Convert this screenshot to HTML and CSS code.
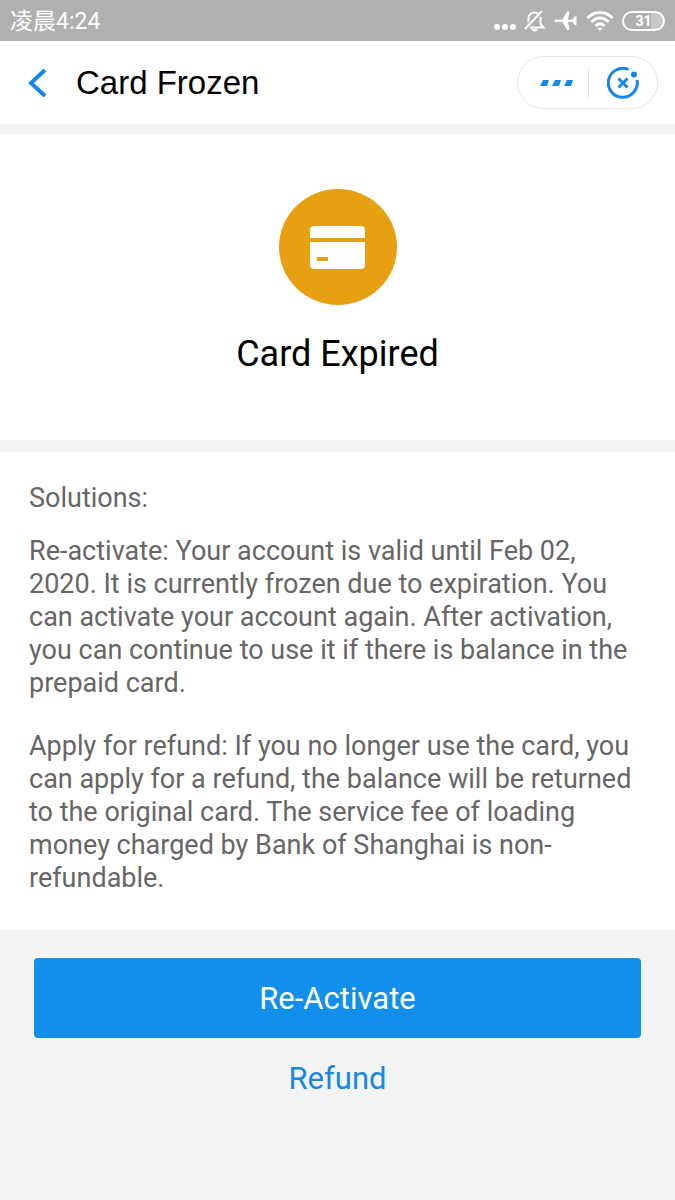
FILE: index.html
```html
<!DOCTYPE html>
<html lang="en">

<head>
    <meta charset="UTF-8" />
    <meta name="viewport" content="width=device-width, initial-scale=1.0" />
    <title>Card Frozen</title>
    <link rel="stylesheet" href="styles.css">
</head>

<body>
    <div class="status-bar">
        <span class="time" lang="zh">凌晨4:24</span>
        <div class="status-icons">
            <svg width="22" height="22" viewBox="0 0 22 22" fill="#fff" aria-hidden="true">
                <circle cx="3" cy="17" r="3" />
                <circle cx="11" cy="17" r="3" />
                <circle cx="19" cy="17" r="3" />
            </svg>
            <svg width="22" height="22" viewBox="0 0 22 22" fill="none" stroke="#fff" stroke-width="2" aria-hidden="true">
                <path d="M4.500 12V9c0-4 2.500-6.500 6-6.500 1.500 0 3 .5 4 1.500M16.500 7v7l3 3.500H6M1 19L18 1" />
                <path d="M7.500 19.500h6l-3 2z" fill="#fff" stroke-width="1" />
            </svg>
            <svg width="24" height="22" viewBox="0 0 24 22" fill="#fff" aria-hidden="true">
                <path d="M1.500 9.500H8.500L13 1.500h2.500L14 9.500H18.500L20.500 6.500h2V15h-2L18.500 12H14l1.500 8H13L8.500 12H1.500C0 12 0 9.500 1.500 9.500z" />
            </svg>
            <svg width="28" height="22" viewBox="0 0 28 22" fill="none" stroke="#fff" stroke-width="3" aria-hidden="true">
                <path d="M1.500 8C8 .5 20 .5 26.500 8" />
                <path d="M5.500 12c4.500-5.500 12.500-5.500 17 0" />
                <path d="M9.500 16c2.500-3 6.500-3 9 0" />
                <path d="M11 18.500c2-1.500 4-1.500 6 0l-3 2.500z" fill="#fff" stroke="none" />
            </svg>
            <span class="battery">31</span>
        </div>
    </div>

    <header class="header">
        <button class="back" type="button" aria-label="Back">
            <svg width="20" height="28" viewBox="0 0 20 28" fill="none" stroke="#1688e8" stroke-width="4">
                <path d="M17 1L3 14l14 13" />
            </svg>
        </button>
        <h1>Card Frozen</h1>
        <div class="capsule">
            <button class="more" type="button" aria-label="More">
                <svg width="34" height="6" viewBox="0 0 34 6" fill="#1688e8">
                    <path d="M3 0h6L7 6H0zM15 0h6l-2 6h-7zM27 0h6l-2 6h-7z" />
                </svg>
            </button>
            <button class="close" type="button" aria-label="Close">
                <svg width="32" height="32" viewBox="0 0 32 32" fill="none" stroke="#1688e8" stroke-width="3">
                    <path d="M21.500 2.500A14.500 14.500 0 1 0 30 13" />
                    <path d="M11.500 11.500l9 9M20.500 11.500l-9 9" />
                    <circle cx="27" cy="7.500" r="3" fill="#1688e8" stroke="none" />
                </svg>
            </button>
        </div>
    </header>

    <section class="card-status">
        <svg width="120" height="118" viewBox="0 0 120 118" aria-hidden="true">
            <ellipse cx="60" cy="59" rx="59" ry="58" fill="#e7a012" />
            <rect x="32" y="38" width="55" height="43" rx="4" fill="#fff" />
            <path d="M32 50h55v4H32zM39 69h11v4H39z" fill="#e7a012" />
        </svg>
        <h2>Card Expired</h2>
    </section>

    <main class="solutions">
        <h3>Solutions:</h3>
        <p>Re-activate: Your account is valid until Feb 02, 2020. It is currently frozen due to expiration. You can activate your account again. After activation, you can continue to use it if there is balance in the prepaid card.</p>
        <p>Apply for refund: If you no longer use the card, you can apply for a refund, the balance will be returned to the original card. The service fee of loading money charged by Bank of Shanghai is non-refundable.</p>
    </main>

    <div class="actions">
        <button class="btn btn-primary" type="button">Re-Activate</button>
        <button class="btn btn-link" type="button">Refund</button>
    </div>
</body>

</html>
```
FILE: styles.css
```css
* {
    box-sizing: border-box;
}

body {
    margin: 0;
    font-family: Roboto, "Noto Sans CJK SC", sans-serif;
    background-color: #f4f4f4;
    color: #000;
}

h1,
h2,
h3,
p {
    margin: 0;
    font-weight: 400;
}

button {
    padding: 0;
    border: 0;
    background: none;
    font-family: inherit;
    cursor: pointer;
}

svg {
    display: block;
}

.status-bar {
    display: flex;
    align-items: center;
    justify-content: space-between;
    height: 41px;
    padding: 0 10px;
    background-color: #b0b0b0;
    color: #fff;
}

.time {
    padding-top: 2px;
    font-size: 23px;
    line-height: 40px;
}

.status-icons {
    display: flex;
    align-items: center;
    gap: 8px;
}

.battery {
    width: 43px;
    height: 20px;
    border: 2px solid #fff;
    border-radius: 10px;
    background: linear-gradient(90deg, transparent 70%, #c8c8c8 70%);
    font-size: 14px;
    font-weight: 700;
    line-height: 16px;
    text-align: center;
}

.header {
    display: flex;
    align-items: center;
    height: 83px;
    padding: 0 17px 0 28px;
    background-color: #fff;
}

.header h1 {
    flex-grow: 1;
    margin-left: 28px;
    font-family: "Liberation Sans", Arial, sans-serif;
    font-size: 33px;
}

.capsule {
    display: flex;
    align-items: center;
    width: 141px;
    height: 53px;
    border: 1px solid #e6e6e6;
    border-radius: 27px;
}

.capsule button {
    display: flex;
    align-items: center;
    justify-content: center;
    height: 30px;
}

.more {
    width: 70px;
    padding-left: 8px;
}

.close {
    flex-grow: 1;
    border-left: 1px solid #e6e6e6;
}

.card-status {
    display: flex;
    flex-direction: column;
    align-items: center;
    margin: 10px 0 12px;
    padding: 54px 20px 64px;
    background-color: #fff;
}

.card-status h2 {
    margin-top: 26px;
    font-size: 36px;
    line-height: 44px;
}

.solutions {
    padding: 30px 29px 35px;
    background-color: #fff;
    color: #666;
    font-size: 27px;
    line-height: 33px;
}

.solutions h3 {
    margin-bottom: 20px;
    font-size: 27px;
}

.solutions p + p {
    margin-top: 30px;
}

.actions {
    display: flex;
    flex-direction: column;
    padding: 28px 34px;
}

.btn {
    height: 80px;
    font-size: 31px;
}

.btn-primary {
    border-radius: 4px;
    background-color: #128eeb;
    color: #fff;
}

.btn-link {
    color: #1688e0;
}
```
